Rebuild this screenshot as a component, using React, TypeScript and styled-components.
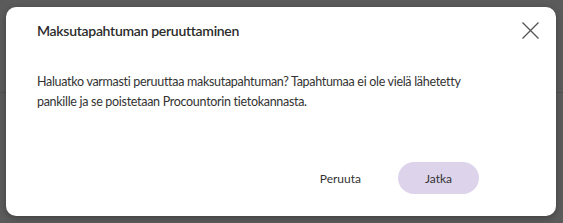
import React from "react";
import styled, { createGlobalStyle } from "styled-components";

const Global = createGlobalStyle`
  html, body { margin: 0; padding: 0; }
  body {
    width: 563px; height: 223px; overflow: hidden;
    background: #5b5b5b;
    font-family: Lato, "Noto Sans", sans-serif;
  }
`;

const Backdrop = styled.div`
  width: 563px;
  height: 223px;
  box-sizing: border-box;
  padding: 7px 7px 7px 6px;
  background: linear-gradient(#5b5b5b 0 92px, #505050 92px 93px, #5b5b5b 93px);
`;

const Dialog = styled.div`
  background: #fff;
  border-radius: 10px;
  height: 209px;
  box-sizing: border-box;
  padding: 7px 17px 22px 31px;
  display: flex;
  flex-direction: column;
  box-shadow: 0 2px 6px rgba(0,0,0,0.3);
`;

const Header = styled.div`
  display: flex;
  align-items: center;
  justify-content: space-between;
  height: 32px;
`;

const Title = styled.h2`
  margin: 0;
  font-size: 14px;
  font-weight: 600;
  letter-spacing: -0.3px;
  color: #2b2b2b;
`;

const CloseButton = styled.button`
  border: none;
  background: none;
  padding: 0;
  width: 18px;
  height: 18px;
  display: flex;
  align-items: center;
  justify-content: center;
  cursor: pointer;
`;

const Body = styled.p`
  margin: 26px 0 0 0;
  font-size: 12.5px;
  line-height: 20px;
  letter-spacing: -0.3px;
  color: #333;
  max-width: 440px;
`;

const Footer = styled.div`
  margin-top: auto;
  display: flex;
  justify-content: flex-end;
  align-items: center;
  gap: 23px;
  padding-right: 60px;
`;

const Button = styled.button<{ $primary?: boolean }>`
  font-family: inherit;
  font-size: 12px;
  color: #333;
  border: none;
  height: 32px;
  border-radius: 16px;
  cursor: pointer;
  background: ${(p) => (p.$primary ? "#ddd4ec" : "transparent")};
  padding: ${(p) => (p.$primary ? "0 24px" : "0 14px")};
  min-width: ${(p) => (p.$primary ? "81px" : "auto")};
`;

export default function App() {
  return (
    <>
      <Global />
      <Backdrop>
        <Dialog>
          <Header>
            <Title>Maksutapahtuman peruuttaminen</Title>
            <CloseButton aria-label="Sulje">
              <svg width="17" height="17" viewBox="0 0 17 17">
                <path d="M0.5 0.5L16.5 16.5M16.5 0.5L0.5 16.5" stroke="#555" strokeWidth="1.3" />
              </svg>
            </CloseButton>
          </Header>
          <Body>
            Haluatko varmasti peruuttaa maksutapahtuman? Tapahtumaa ei ole vielä lähetetty
            pankille ja se poistetaan Procountorin tietokannasta.
          </Body>
          <Footer>
            <Button>Peruuta</Button>
            <Button $primary>Jatka</Button>
          </Footer>
        </Dialog>
      </Backdrop>
    </>
  );
}
